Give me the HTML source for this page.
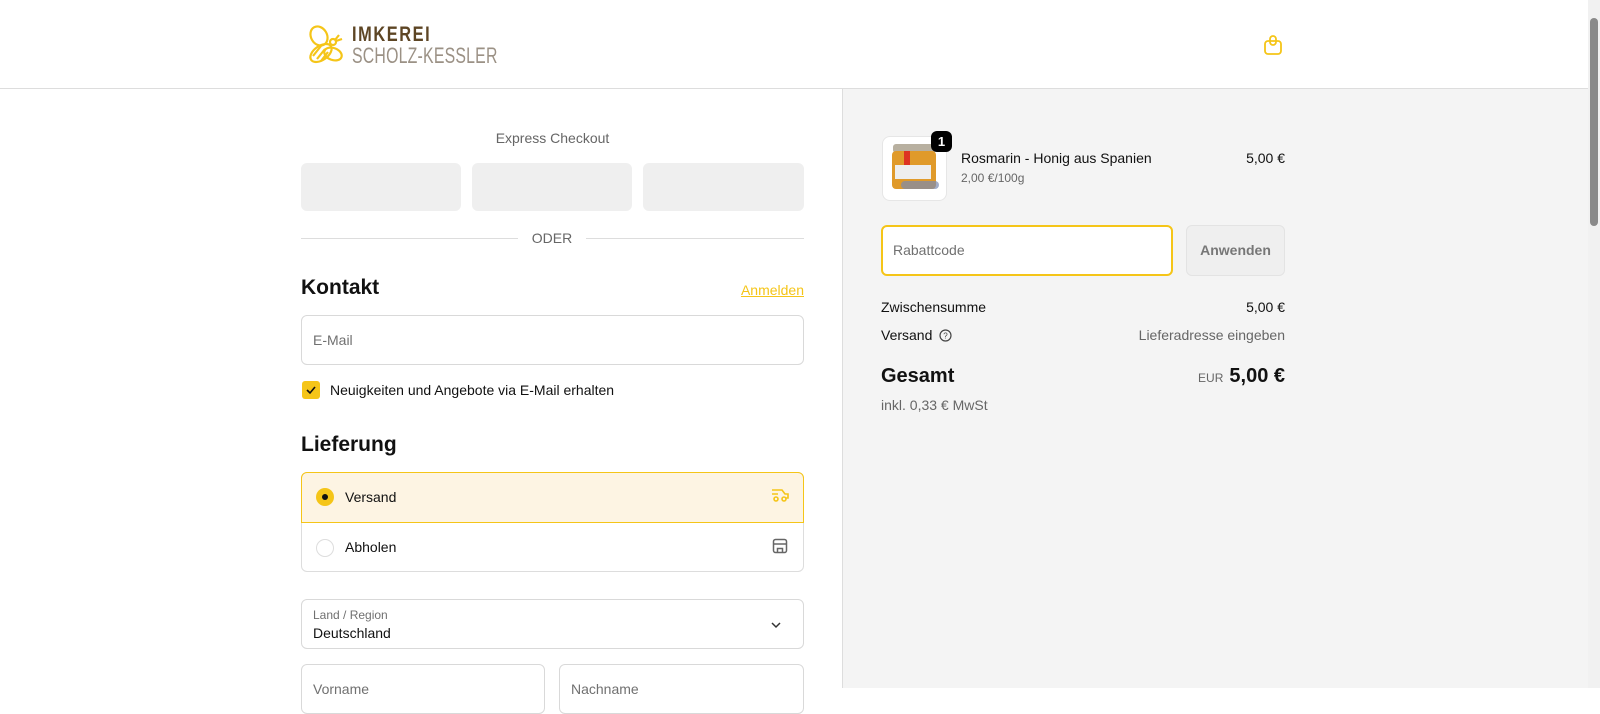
<!DOCTYPE html>
<html><head><meta charset="utf-8"><style>
*{box-sizing:border-box;margin:0;padding:0}
body{width:1600px;height:688px;overflow:hidden;font-family:"Liberation Sans",sans-serif;color:#111;background:#fff;position:relative;font-size:14px}
.abs{position:absolute}
.hdr{left:0;top:0;width:1588px;height:89px;border-bottom:1px solid #ddd;background:#fff}
.right{left:842px;top:89px;width:746px;height:599px;background:#f4f4f4;border-left:1px solid #ddd}
.sb{left:1588px;top:0;width:12px;height:688px;background:#f1f1f1}
.sb div{position:absolute;left:2px;top:18px;width:8px;height:208px;background:#8a8a8a;border-radius:4px}
.inp{border:1px solid #d9d9d9;border-radius:6px;background:#fff}
.ph{color:#707070}
</style></head><body>
<div class="abs hdr">
 <svg class="abs" style="left:307px;top:24px" width="42" height="42" viewBox="0 0 42 42" fill="none" stroke="#f5c518" stroke-width="2.2">
  <ellipse cx="12" cy="12" rx="8" ry="10" transform="rotate(-30 12 12)"/>
  <ellipse cx="26" cy="30" rx="9" ry="6" transform="rotate(20 26 30)"/>
  <ellipse cx="14" cy="29" rx="12" ry="7" transform="rotate(-35 14 29)"/>
  <path d="M6 32l8-10M10 35l8-10M14 37l7-9"/>
  <circle cx="26" cy="18" r="3"/><path d="M28 16l4-5M29 17l6-2"/>
 </svg>
 <div class="abs" style="left:352px;top:23px;font-size:21px;letter-spacing:2px;color:#5d4524;font-weight:bold;transform:scaleX(.78);transform-origin:left">IMKEREI</div>
 <div class="abs" style="left:352px;top:43px;font-size:22px;letter-spacing:.3px;color:#9b9185;transform:scaleX(.72);transform-origin:left">SCHOLZ-KESSLER</div>
 <svg class="abs" style="left:1263px;top:34px" width="20" height="22" viewBox="0 0 20 22" fill="none" stroke="#f5c518" stroke-width="1.8"><rect x="2" y="7" width="16" height="13" rx="3"/><rect x="7" y="2" width="6" height="9" rx="3"/></svg>
</div>
<div class="abs right"></div>
<div class="abs sb"><div></div></div>

<div class="abs" style="left:301px;top:130px;width:503px;text-align:center;color:#666;font-size:14px">Express Checkout</div>
<div class="abs" style="left:301px;top:163px;width:160px;height:48px;background:#efefef;border-radius:6px"></div>
<div class="abs" style="left:472px;top:163px;width:160px;height:48px;background:#efefef;border-radius:6px"></div>
<div class="abs" style="left:643px;top:163px;width:161px;height:48px;background:#efefef;border-radius:6px"></div>
<div class="abs" style="left:301px;top:238px;width:217px;border-top:1px solid #ddd"></div>
<div class="abs" style="left:586px;top:238px;width:218px;border-top:1px solid #ddd"></div>
<div class="abs" style="left:518px;top:230px;width:68px;text-align:center;color:#666;font-size:14px">ODER</div>

<div class="abs" style="left:301px;top:276px;font-size:21px;font-weight:bold">Kontakt</div>
<div class="abs" style="left:700px;top:282px;width:104px;text-align:right;color:#f5c518;text-decoration:underline;font-size:14px">Anmelden</div>
<div class="abs inp" style="left:301px;top:315px;width:503px;height:50px"><span class="abs ph" style="left:11px;top:16px">E-Mail</span></div>
<div class="abs" style="left:302px;top:381px;width:18px;height:18px;background:#f5c518;border-radius:3px"><svg width="18" height="18"><path d="M5 9l3 3 5-6" stroke="#111" stroke-width="1.6" fill="none"/></svg></div>
<div class="abs" style="left:330px;top:382px">Neuigkeiten und Angebote via E-Mail erhalten</div>

<div class="abs" style="left:301px;top:433px;font-size:21px;font-weight:bold">Lieferung</div>
<div class="abs" style="left:301px;top:472px;width:503px;height:100px;border:1px solid #ddd;border-radius:6px"></div>
<div class="abs" style="left:301px;top:472px;width:503px;height:51px;border:1px solid #f5c518;border-radius:6px 6px 0 0;background:#fdf4e3"></div>
<div class="abs" style="left:316px;top:488px;width:18px;height:18px;border-radius:50%;background:#f5c518"><div class="abs" style="left:6px;top:6px;width:6px;height:6px;border-radius:50%;background:#111"></div></div>
<div class="abs" style="left:345px;top:489px">Versand</div>
<svg class="abs" style="left:771px;top:488px" width="18" height="14" viewBox="0 0 18 14" fill="none" stroke="#f5c518" stroke-width="1.6"><path d="M1 2h10l3 4h3v4h-2M1 6h6M3 10h1"/><circle cx="5" cy="11" r="2"/><circle cx="13" cy="11" r="2"/></svg>
<div class="abs" style="left:316px;top:539px;width:18px;height:18px;border-radius:50%;border:1px solid #ddd;background:#fff"></div>
<div class="abs" style="left:345px;top:539px">Abholen</div>
<svg class="abs" style="left:772px;top:538px" width="16" height="16" viewBox="0 0 16 16" fill="none" stroke="#666" stroke-width="1.5"><rect x="1.5" y="1.5" width="13" height="13" rx="2"/><path d="M1.5 6h13M5.5 14.5v-4h5v4"/></svg>

<div class="abs inp" style="left:301px;top:599px;width:503px;height:50px"><span class="abs ph" style="left:11px;top:8px;font-size:12px">Land / Region</span><span class="abs" style="left:11px;top:25px">Deutschland</span>
<svg class="abs" style="left:468px;top:20px" width="12" height="10"><path d="M2 3l4 4 4-4" stroke="#333" stroke-width="1.5" fill="none"/></svg></div>
<div class="abs inp" style="left:301px;top:664px;width:244px;height:50px"><span class="abs ph" style="left:11px;top:16px">Vorname</span></div>
<div class="abs inp" style="left:559px;top:664px;width:245px;height:50px"><span class="abs ph" style="left:11px;top:16px">Nachname</span></div>

<div class="abs" style="left:882px;top:136px;width:65px;height:65px;border-radius:8px;background:#fff;border:1px solid #e6e6e6;overflow:hidden">
 <div class="abs" style="left:10px;top:7px;width:42px;height:9px;background:#b8b0a0;border-radius:3px"></div>
 <div class="abs" style="left:9px;top:14px;width:44px;height:38px;background:#e09a2a;border-radius:4px"></div>
 <div class="abs" style="left:21px;top:14px;width:6px;height:20px;background:#d32;"></div>
 <div class="abs" style="left:12px;top:28px;width:36px;height:14px;background:#eee"></div>
 <div class="abs" style="left:18px;top:44px;width:38px;height:8px;background:#7a8ab0;border-radius:4px;opacity:.7"></div>
</div>
<div class="abs" style="left:931px;top:131px;width:21px;height:21px;background:#000;color:#fff;border-radius:6px;font-weight:bold;font-size:13px;text-align:center;line-height:21px">1</div>
<div class="abs" style="left:961px;top:150px">Rosmarin - Honig aus Spanien</div>
<div class="abs" style="left:961px;top:171px;font-size:12px;color:#666">2,00 €/100g</div>
<div class="abs" style="left:1200px;top:150px;width:85px;text-align:right">5,00 €</div>

<div class="abs" style="left:881px;top:225px;width:292px;height:51px;border:2px solid #f5c518;border-radius:6px;background:#fff"><span class="abs ph" style="left:10px;top:15px">Rabattcode</span></div>
<div class="abs" style="left:1186px;top:225px;width:99px;height:51px;border:1px solid #e3e3e3;border-radius:6px;background:#efefef;color:#777;font-weight:bold;text-align:center;line-height:49px">Anwenden</div>

<div class="abs" style="left:881px;top:299px">Zwischensumme</div>
<div class="abs" style="left:1185px;top:299px;width:100px;text-align:right">5,00 €</div>
<div class="abs" style="left:881px;top:327px">Versand <svg width="13" height="13" viewBox="0 0 13 13" style="vertical-align:-2px;margin-left:3px"><circle cx="6.5" cy="6.5" r="5.5" fill="none" stroke="#444" stroke-width="1.2"/><text x="6.5" y="9.5" font-size="8" text-anchor="middle" fill="#444" font-family="Liberation Sans">?</text></svg></div>
<div class="abs" style="left:1085px;top:327px;width:200px;text-align:right;color:#666">Lieferadresse eingeben</div>
<div class="abs" style="left:881px;top:365px;font-size:20px;font-weight:bold">Gesamt</div>
<div class="abs" style="left:1100px;top:365px;width:185px;text-align:right"><span style="font-size:12px;color:#666;margin-right:6px">EUR</span><span style="font-size:20px;font-weight:bold">5,00 €</span></div>
<div class="abs" style="left:881px;top:397px;color:#666">inkl. 0,33 € MwSt</div>
</body></html>
